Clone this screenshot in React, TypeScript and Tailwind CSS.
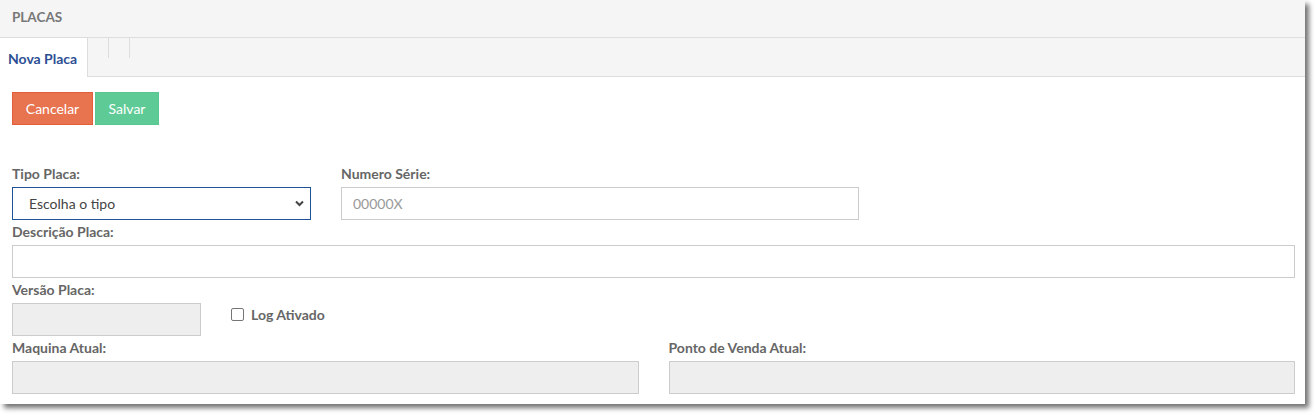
import React from "react";

const Label = ({ children }: { children: React.ReactNode }) => (
  <div className="h-[18px] mb-[4px] text-[14px] leading-[18px] font-bold text-[#666]">{children}</div>
);

export default function App() {
  return (
    <div className="w-[1315px] h-[414px] bg-white font-['Lato',sans-serif]">
      <div className="w-[1305px] h-[404px] bg-white shadow-[4px_4px_5px_rgba(0,0,0,0.55)] flex flex-col">
        <div className="h-[38px] bg-[#f5f5f5] border-b border-[#dddddd] pl-[12px] pb-[2px] flex items-center text-[13.5px] font-bold text-[#777]">
          PLACAS
        </div>
        <div className="h-[39px] bg-[#f5f5f5] border-b border-[#dddddd] flex items-start">
          <div className="w-[88px] h-[39px] bg-white border-r border-[#dddddd] flex items-center pl-[8px] pt-[2px] text-[14px] font-bold text-[#2d4f94]">
            Nova Placa
          </div>
          <div className="w-[21px] h-[20px] border-r border-[#dddddd]" />
          <div className="w-[21px] h-[20px] border-r border-[#dddddd]" />
        </div>
        <div className="pl-[12px] pr-[10px] pt-[15px]">
          <div className="flex gap-[2px]">
            <button className="w-[81px] h-[33px] bg-[#e8734f] border border-[#e35d3a] text-white text-[14px]">Cancelar</button>
            <button className="w-[64px] h-[33px] bg-[#5ecb96] border border-[#58c890] text-white text-[14px]">Salvar</button>
          </div>
          <div className="mt-[40px] flex gap-[30px]">
            <div className="w-[299px]">
              <Label>Tipo Placa:</Label>
              <div className="relative h-[33px]">
                <select className="appearance-none w-full h-[33px] border border-[#1f5396] pl-[16px] text-[14px] text-[#444] bg-white outline-none">
                  <option>Escolha o tipo</option>
                </select>
                <svg className="absolute right-[7px] top-[13px]" width="9" height="7" viewBox="0 0 9 7">
                  <path d="M1 1.5 L4.5 5 L8 1.5" fill="none" stroke="#444" strokeWidth="2" />
                </svg>
              </div>
            </div>
            <div className="w-[518px]">
              <Label>Numero Série:</Label>
              <input
                placeholder="00000X"
                className="w-full h-[33px] border border-[#cccccc] px-[11px] text-[14px] text-[#444] placeholder:text-[#999] outline-none"
              />
            </div>
          </div>
          <div className="mt-[3px]">
            <Label>Descrição Placa:</Label>
            <input className="w-full h-[33px] border border-[#cccccc] px-[11px] text-[14px] outline-none" />
          </div>
          <div className="mt-[3px] flex gap-[30px]">
            <div className="w-[189px] shrink-0">
              <Label>Versão Placa:</Label>
              <input disabled className="w-full h-[33px] border border-[#cccccc] bg-[#eeeeee] outline-none" />
            </div>
            <div className="pt-[24px]">
              <label className="flex items-center gap-[7px] h-[18px] text-[14px] font-bold text-[#666]">
                <span className="w-[13px] h-[13px] border border-[#767676] rounded-[2px] bg-white" />
                Log Ativado
              </label>
            </div>
          </div>
          <div className="mt-[3px] grid grid-cols-2 gap-[30px]">
            <div>
              <Label>Maquina Atual:</Label>
              <input disabled className="w-full h-[33px] border border-[#cccccc] bg-[#eeeeee] outline-none" />
            </div>
            <div>
              <Label>Ponto de Venda Atual:</Label>
              <input disabled className="w-full h-[33px] border border-[#cccccc] bg-[#eeeeee] outline-none" />
            </div>
          </div>
        </div>
      </div>
    </div>
  );
}
